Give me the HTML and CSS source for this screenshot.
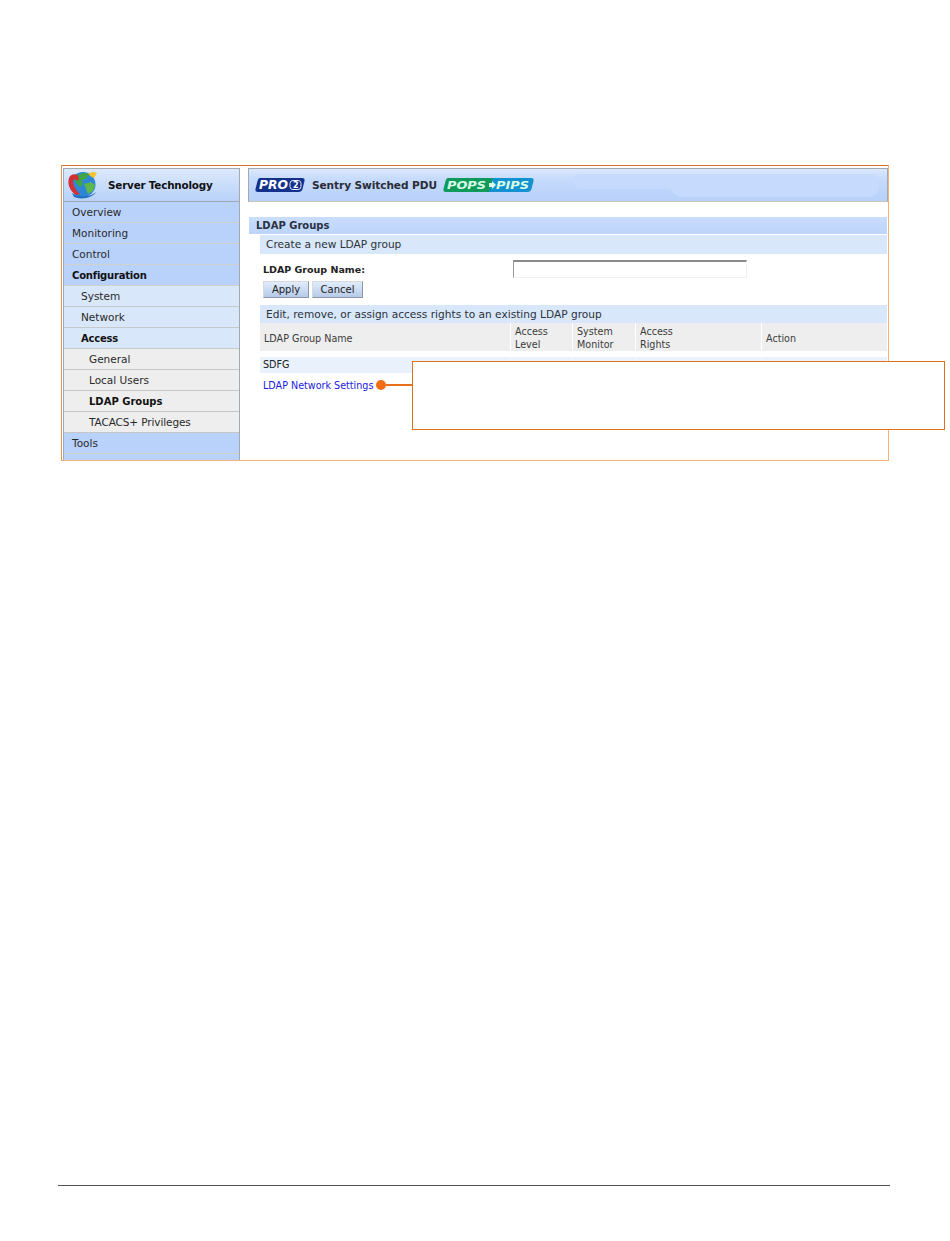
FILE: index.html
```html
<!DOCTYPE html>
<html lang="en">
<head>
<meta charset="utf-8">
<title>LDAP Groups</title>
<link rel="stylesheet" href="styles.css">
</head>
<body>
<div class="frame">
  <nav class="side">
    <div class="brand">
      <svg class="globe" width="32" height="28" viewBox="0 0 32 28">
        <circle cx="16" cy="13.500" r="12.500" fill="#2f86d6"/>
        <path d="M9 6c3-4 9-5 13-3l-3 5-4 1 1 4-3 3-3-3-2-3z" fill="#3fa648"/>
        <path d="M17 13l7-2 4 3-2 6-5 3-2-5z" fill="#5cb84a"/>
        <path d="M21 2l6-1 3 1-3 5-4-2z" fill="#f2c230"/>
        <path d="M9 24C3 20 0 13 2 7c1-3 5-5 8-3 2 1 2 4 1 6-2-2-5-2-5 0 0 4 3 10 7 13z" fill="#d32f35"/>
        <path d="M5 22c6 4 18 5 24-1-3 6-15 8-22 5z" fill="#1f6fc0"/>
      </svg>
      <span class="brand-name">Server Technology</span>
    </div>
    <a class="item l1">Overview</a>
    <a class="item l1">Monitoring</a>
    <a class="item l1">Control</a>
    <a class="item l1 on">Configuration</a>
    <a class="item l2">System</a>
    <a class="item l2">Network</a>
    <a class="item l2 on">Access</a>
    <a class="item l3">General</a>
    <a class="item l3">Local Users</a>
    <a class="item l3 on wide">LDAP Groups</a>
    <a class="item l3 tight">TACACS+ Privileges</a>
    <a class="item l1">Tools</a>
    <div class="side-end"></div>
  </nav>
  <main class="main">
    <header class="top">
      <svg class="pro" width="50" height="14" viewBox="0 0 50 14">
        <path d="M5 0h42c2 0 3 1 2.500 3l-2 8c-.5 2-2 3-4 3H3c-2 0-3-1-2.500-3l2-8C3 1 4 0 5 0z" fill="#14318c"/>
        <text x="4" y="11" class="pro-text" textLength="29" lengthAdjust="spacingAndGlyphs">PRO</text>
        <rect x="35" y="2.500" width="11" height="9" rx="3" fill="none" stroke="#dfe8ff" stroke-width="1"/>
        <text x="38" y="10" class="pro-two">2</text>
      </svg>
      <span class="title">Sentry Switched PDU</span>
      <svg class="pops" width="91" height="14" viewBox="0 0 91 14">
        <path d="M5 0h47l-4 14H3c-2 0-3-1-2.500-3l2-8C3 1 4 0 5 0z" fill="#0f9a5c"/>
        <path d="M50 0h38c2 0 3 1 2.500 3l-2 8c-.5 2-2 3-4 3H46z" fill="#1491d0"/>
        <text x="4" y="11" class="pops-text" textLength="39" lengthAdjust="spacingAndGlyphs">POPS</text>
        <path d="M46 5h3V3l4 4-4 4V9h-3z" fill="#d8ffe8"/>
        <text x="53" y="11" class="pops-text" textLength="33" lengthAdjust="spacingAndGlyphs">PIPS</text>
      </svg>
      <div class="cloud"></div>
    </header>

    <section class="content">
      <h1 class="bar-main">LDAP Groups</h1>
      <div class="panel">
        <h2 class="bar-sub">Create a new LDAP group</h2>
        <div class="form-row">
          <label class="form-label" for="group">LDAP Group Name:</label>
          <input class="form-input" id="group" type="text">
        </div>
        <div class="buttons">
          <button class="btn apply" type="button">Apply</button>
          <button class="btn cancel" type="button">Cancel</button>
        </div>
        <h2 class="bar-sub edit">Edit, remove, or assign access rights to an existing LDAP group</h2>
        <div class="grid head">
          <div class="cell name">LDAP Group Name</div>
          <div class="cell">Access<br>Level</div>
          <div class="cell">System<br>Monitor</div>
          <div class="cell">Access<br>Rights</div>
          <div class="cell name">Action</div>
        </div>
        <div class="grid row">
          <div class="cell">SDFG</div>
          <div class="cell"></div>
          <div class="cell"></div>
          <div class="cell"></div>
          <div class="cell action">Edit</div>
        </div>
      </div>
      <div class="link-row">
        <a class="link">LDAP Network Settings</a>
        <span class="dot"></span>
        <span class="leader"></span>
      </div>
    </section>
    <div class="callout"></div>
  </main>
</div>
<div class="rule"></div>
</body>
</html>
```

FILE: styles.css
```css
* { box-sizing: border-box; }

html, body { margin: 0; padding: 0; background: #fff; }

body {
  height: 1241px;
  overflow: hidden;
  padding-top: 165px;
  font-family: "DejaVu Sans", Verdana, sans-serif;
  font-size: 10px;
  color: #222;
}

.frame {
  display: flex;
  width: 828px;
  height: 296px;
  margin-left: 61px;
  padding: 2px 0 0 1px;
  border-top: 1px solid #d9742c;
  border-left: 1px solid #e8944f;
  border-right: 1px solid #f6b27c;
  border-bottom: 1px solid #f6b27c;
}

.side {
  display: flex;
  flex-direction: column;
  flex: none;
  width: 177px;
  height: 292px;
  border: 1px solid #a3a9b2;
  border-bottom: 0;
  background: #b9d2fb;
}

.brand {
  display: flex;
  align-items: center;
  height: 33px;
  flex: none;
  padding-left: 3px;
  background: linear-gradient(#dce9fd, #b8d1f9);
  border-bottom: 1px solid #a3a9b2;
}

.globe { flex: none; }

.brand-name {
  margin-left: 9px;
  font-size: 10.400px;
  font-weight: bold;
  color: #111;
  letter-spacing: -0.2px;
}

.item {
  display: flex;
  align-items: center;
  flex: none;
  height: 21px;
  font-size: 10.500px;
  color: #2a2a2a;
  border-bottom: 1px solid #cfd3cc;
}

.l1 { padding-left: 8px; background: #b9d2fb; }
.l2 { padding-left: 17px; background: #d9e7fb; border-bottom-color: #c4c9c9; }
.l3 { padding-left: 25px; background: #eeeeee; border-bottom-color: #c6c6c6; }
.tight { letter-spacing: -0.1px; }
.on { font-size: 10px; font-weight: bold; color: #111; letter-spacing: -0.2px; }
.wide { letter-spacing: 0; }

.side-end { flex: 1; background: #b9d2fb; }

.main {
  position: relative;
  flex: 1;
  min-width: 0;
  margin-left: 8px;
}

.top {
  position: relative;
  display: flex;
  align-items: center;
  height: 34px;
  padding-left: 6px;
  background: linear-gradient(#dce9fd, #c6dbfd 30%, #b8d1f9);
  border: 1px solid #a3a9b2;
  border-bottom-color: #c8c4b4;
}

.pro { flex: none; }
.pro-text { font: italic 900 12px "DejaVu Sans", sans-serif; fill: #fff; }
.pro-two { font: bold 8px "DejaVu Sans", sans-serif; fill: #fff; }

.title {
  margin-left: 7px;
  font-size: 10.600px;
  font-weight: bold;
  color: #2c2c34;
  letter-spacing: -0.1px;
}

.pops { flex: none; margin-left: 6px; }
.pops-text { font: italic 900 11px "DejaVu Sans", sans-serif; fill: #d8ffe8; }

.cloud {
  position: absolute;
  left: 418px;
  right: 8px;
  top: 5px;
  bottom: 4px;
  border-radius: 10px 14px 18px 30px;
  background: #c5dafc;
}

.cloud::before {
  content: "";
  position: absolute;
  left: -94px;
  width: 120px;
  top: 0;
  height: 15px;
  border-radius: 8px;
  background: #c5dafc;
}

.content {
  padding: 15px 1px 0;
}

.bar-main {
  margin: 0;
  height: 17px;
  padding: 2px 0 0 7px;
  font-size: 10px;
  line-height: 14px;
  font-weight: bold;
  color: #2a3140;
  background: linear-gradient(#c9ddfd, #bdd5fb);
}

.panel { margin: 1px 0 0 11px; }

.bar-sub {
  margin: 0;
  height: 19px;
  padding-left: 6px;
  font-size: 10.600px;
  line-height: 19px;
  font-weight: normal;
  color: #2c3238;
  background: #d9e7fb;
}

.form-row {
  display: flex;
  align-items: center;
  height: 18px;
  margin-top: 6px;
  padding-left: 3px;
}

.form-label {
  width: 250px;
  flex: none;
  padding-top: 1px;
  font-size: 9.500px;
  font-weight: bold;
  color: #222;
}

.form-input {
  width: 234px;
  height: 18px;
  padding: 0;
  background: #fff;
  border: 1px solid #f0f0f0;
  border-top: 2px solid #8a8a8a;
  border-left: 1px solid #999;
}

.buttons {
  display: flex;
  gap: 3px;
  height: 17px;
  margin-top: 3px;
  padding-left: 3px;
}

.btn {
  height: 17px;
  padding: 0;
  font: 10px "DejaVu Sans", sans-serif;
  color: #222;
  background: linear-gradient(#e2ecfb, #b6cbe9);
  border: 1px solid #d5d9e0;
  border-right-color: #8c97a8;
  border-bottom-color: #8c97a8;
}

.apply { width: 46px; }
.cancel { width: 51px; }

.edit { margin-top: 7px; height: 18px; line-height: 18px; }

.grid {
  display: grid;
  grid-template-columns: 250px 62px 63px 126px 126px;
}

.head { height: 28px; }

.cell {
  padding-left: 4px;
  font-size: 9.600px;
  line-height: 13px;
  color: #3c3c3c;
  border-left: 1px solid #fff;
}

.grid .cell:first-child { border-left: 0; }

.head .cell {
  display: flex;
  align-items: center;
  padding-top: 2px;
  background: #eeeeee;
}

.row {
  height: 15px;
  margin-top: 6px;
}

.row .cell {
  padding-left: 3px;
  line-height: 15px;
  background: #e9f1fd;
  color: #222;
  border-left-color: #f4f8fe;
}

.row .action { padding: 1px 0 0 4px; color: #1a1ae0; }

.link-row {
  display: flex;
  align-items: center;
  height: 12px;
  margin: 7px 0 0 14px;
}

.link {
  font-size: 9.600px;
  color: #1a1ae0;
  white-space: nowrap;
}

.dot {
  flex: none;
  width: 10px;
  height: 10px;
  margin-left: 3px;
  border-radius: 50%;
  background: #f26c12;
}

.leader {
  flex: none;
  width: 27px;
  height: 2px;
  background: #e8701c;
}

.callout {
  position: absolute;
  left: 164px;
  top: 193px;
  width: 533px;
  height: 69px;
  background: #fff;
  border: 1px solid #e0701c;
}

.rule {
  width: 832px;
  height: 1px;
  margin: 724px 0 0 58px;
  background: #55504c;
}
```
